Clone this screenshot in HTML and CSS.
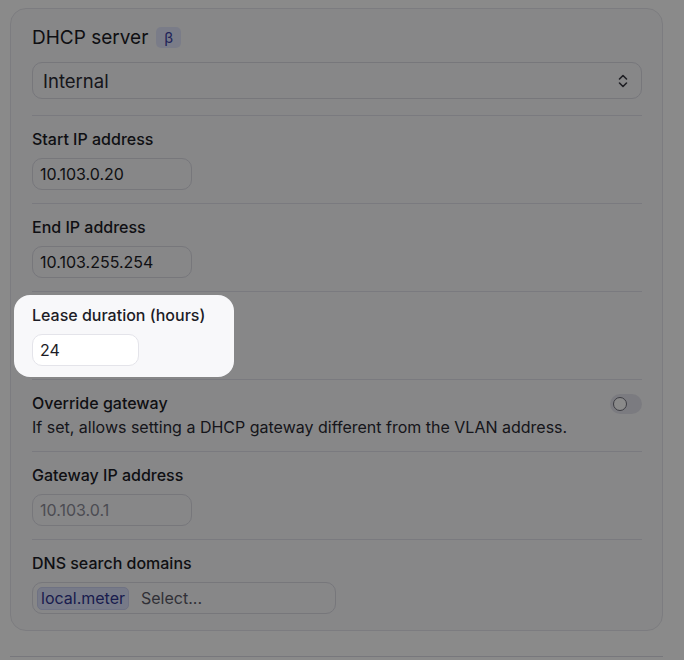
FILE: index.html
```html
<!DOCTYPE html>
<html lang="en">
<head>
<meta charset="utf-8">
<title>DHCP server</title>
<link rel="stylesheet" href="styles.css">
</head>
<body>
<div class="page">
  <div class="card">
    <div class="header">
      <div class="title-row">
        <span class="title">DHCP server</span>
        <span class="badge">β</span>
      </div>
      <div class="select">
        <span>Internal</span>
        <svg class="chev" width="12" height="16" viewBox="0 0 12 16" fill="none" stroke="currentColor" stroke-width="1.6" stroke-linecap="round" stroke-linejoin="round"><path d="M2.5 6 6 2.5 9.5 6"/><path d="M2.5 10 6 13.5 9.5 10"/></svg>
      </div>
    </div>
    <div class="field">
      <label class="label">Start IP address</label>
      <div class="input w160">10.103.0.20</div>
    </div>
    <div class="field">
      <label class="label">End IP address</label>
      <div class="input w160">10.103.255.254</div>
    </div>
    <div class="field spotlight">
      <label class="label">Lease duration (hours)</label>
      <div class="input w107">24</div>
    </div>
    <div class="field toggle-field">
      <div class="toggle-text">
        <div class="label">Override gateway</div>
        <div class="desc">If set, allows setting a DHCP gateway different from the VLAN address.</div>
      </div>
      <span class="switch"><span class="knob"></span></span>
    </div>
    <div class="field">
      <label class="label">Gateway IP address</label>
      <div class="input w160 disabled">10.103.0.1</div>
    </div>
    <div class="field last">
      <label class="label">DNS search domains</label>
      <div class="multi">
        <span class="chip">local.meter</span>
        <span class="placeholder">Select...</span>
      </div>
    </div>
  </div>
  <div class="footer-line"></div>
</div>
</body>
</html>
```
FILE: styles.css
```css
* { box-sizing: border-box; }
html, body { margin: 0; padding: 0; }
body {
  background: #ffffff;
  font-family: Inter, "Noto Sans", sans-serif;
  color: #1c1c26;
  width: 684px;
  height: 660px;
  overflow: hidden;
}
.page {
  padding: 8px 21px 0 10px;
}
.card {
  background: #f9f9fb;
  border: 1px solid #e6e6ec;
  border-radius: 16px;
  padding: 0 20px 0 21px;
  height: 623px;
}
.header {
  padding-top: 15px;
  padding-bottom: 16px;
  border-bottom: 1px solid #e2e2ea;
}
.title-row {
  display: flex;
  align-items: center;
  gap: 8px;
  height: 26px;
}
.title {
  font-size: 19px;
  font-weight: 400;
}
.badge {
  display: inline-flex;
  align-items: center;
  justify-content: center;
  width: 25px;
  height: 21px;
  border-radius: 5px;
  background: #e2e6fb;
  color: #3c42a6;
  font-size: 15px;
  margin-top: 1px;
}
.select {
  margin-top: 12px;
  height: 37px;
  border: 1px solid #dcdce4;
  border-radius: 10px;
  background: #f9f9fb;
  display: flex;
  align-items: center;
  justify-content: space-between;
  padding: 0 12px 0 10px;
  font-size: 18.5px;
  color: #2a2a33;
}
.chev { color: #3a3a44; }
.field {
  padding: 13px 0 13px;
  border-bottom: 1px solid #e2e2ea;
  display: flex;
  flex-direction: column;
  gap: 9px;
}
.label {
  font-size: 16px;
  font-weight: 500;
  line-height: 20px;
  color: #1c1c26;
}
.input {
  height: 32px;
  border: 1px solid #dcdce4;
  border-radius: 10px;
  background: #f9f9fb;
  display: flex;
  align-items: center;
  padding: 0 7px;
  font-size: 16px;
  color: #1c1c26;
}
.w160 { width: 160px; }
.w107 { width: 107px; }
.disabled { color: #8d8d99; }
.spotlight {
  position: relative;
  z-index: 1;
}
.spotlight::before {
  content: "";
  position: absolute;
  left: -18px;
  top: 3px;
  width: 220px;
  height: 82px;
  border-radius: 16px;
  background: #f8f8fa;
  box-shadow: 0 0 0 3000px rgba(0, 0, 0, 0.46);
  z-index: -1;
}
.spotlight .input {
  background: #ffffff;
  border-color: #e4e4ea;
}
.toggle-field {
  flex-direction: row;
  justify-content: space-between;
  align-items: flex-start;
  padding-top: 13px;
  padding-bottom: 14px;
}
.toggle-text {
  display: flex;
  flex-direction: column;
  gap: 4px;
}
.desc {
  font-size: 16px;
  line-height: 20px;
  color: #2a2a33;
}
.switch {
  width: 32px;
  height: 20px;
  border-radius: 10px;
  background: #e4e4ec;
  display: flex;
  align-items: center;
  padding: 3px;
  margin-top: 1px;
}
.knob {
  width: 14px;
  height: 14px;
  border-radius: 50%;
  background: #ffffff;
  border: 1.5px solid #6e6e7a;
}
.last {
  border-bottom: none;
}
.multi {
  width: 304px;
  height: 32px;
  border: 1px solid #dcdce4;
  border-radius: 10px;
  background: #f9f9fb;
  display: flex;
  align-items: center;
  padding: 0 4px;
  gap: 12px;
  font-size: 16px;
}
.chip {
  background: #dde2fb;
  color: #2f3590;
  border: 1px solid #cdd3f3;
  border-radius: 5px;
  padding: 0 3px;
  height: 23px;
  display: inline-flex;
  align-items: center;
}
.placeholder {
  color: #5a5a66;
}
.footer-line {
  margin-top: 25px;
  height: 1px;
  background: #dcdce6;
  margin-right: 0;
}
```
